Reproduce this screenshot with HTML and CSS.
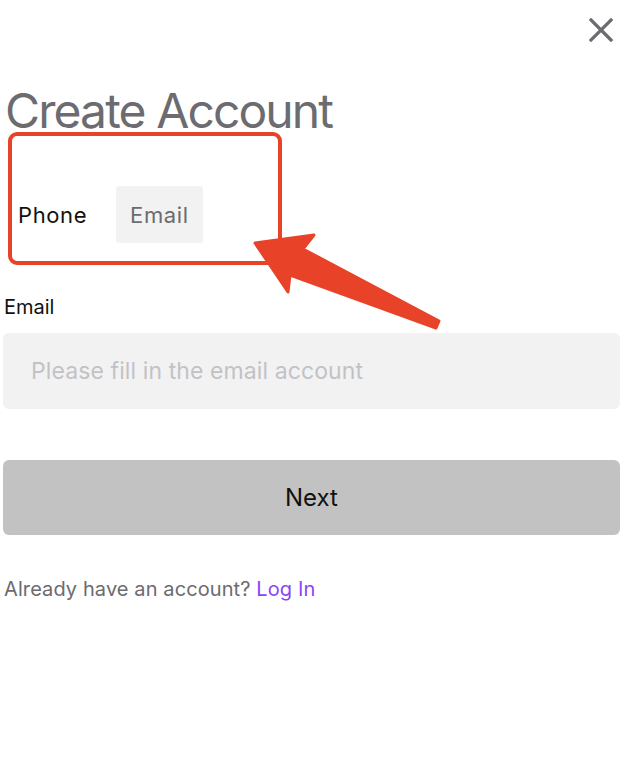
FILE: index.html
```html
<!DOCTYPE html>
<html lang="en">
<head>
  <meta charset="UTF-8" />
  <title>Create Account</title>
  <link rel="stylesheet" href="styles.css">
</head>
<body>

<div class="page">
  <div class="topbar">
    <button class="close" aria-label="Close">
      <svg width="24" height="24" viewBox="0 0 24 24">
        <path d="M2 2 L22 22 M22 2 L2 22" stroke="#6b6b70" stroke-width="3.2" stroke-linecap="square" fill="none"/>
      </svg>
    </button>
  </div>

  <h1 class="title">Create Account</h1>

  <div class="tabs">
    <div class="tab active">Phone</div>
    <div class="tab selected">Email</div>
  </div>

  <label class="label" for="email">Email</label>
  <div class="input-wrap">
    <input id="email" class="input" type="text" placeholder="Please fill in the email account">
  </div>

  <button class="next">Next</button>

  <p class="login">Already have an account? <a href="#">Log In</a></p>

  <!-- annotation over the tabs -->
  <div class="mark-box"></div>
  <svg class="mark-arrow" width="642" height="400" viewBox="0 0 642 400">
    <polygon points="255,243 314,235 303,249 439,321 436,328 290,275 288,292" fill="#e84329" stroke="#e84329" stroke-width="3" stroke-linejoin="round"/>
  </svg>
</div>

</body>
</html>
```

FILE: styles.css
```css
body {
  margin: 0;
  font-family: Inter, "Noto Sans", sans-serif;
  background: #fff;
}

.page {
  position: relative;
  padding: 0 22px 0 3px;
}

.topbar {
  display: flex;
  justify-content: flex-end;
  padding-top: 18px;
}

.close {
  border: 0;
  background: none;
  padding: 0;
  margin-right: 7px;
  width: 24px;
  height: 24px;
  display: block;
}

.close svg {
  display: block;
}

.title {
  margin: 40px 0 0 2px;
  font-size: 48px;
  line-height: 58px;
  font-weight: 400;
  color: #6b6b70;
  letter-spacing: -1.9px;
}

.tabs {
  display: flex;
  gap: 15px;
  margin-top: 46px;
  padding-left: 1px;
}

.tab {
  height: 57px;
  display: flex;
  align-items: center;
  padding: 0 14px;
  font-size: 22px;
  letter-spacing: 0.6px;
  border-radius: 3px;
}

.tab.active {
  color: #111;
}

.tab.selected {
  background: #f2f2f2;
  color: #6b6b70;
}

.label {
  display: block;
  margin: 53px 0 0 1px;
  font-size: 20px;
  line-height: 22px;
  color: #111;
}

.input-wrap {
  margin-top: 15px;
}

.input {
  box-sizing: border-box;
  width: 100%;
  height: 76px;
  border: 0;
  border-radius: 6px;
  background: #f2f2f2;
  padding: 0 28px;
  font-family: inherit;
  font-size: 23px;
  letter-spacing: 0.1px;
  outline: none;
}

.input::placeholder {
  color: #c2c2c6;
}

.next {
  display: block;
  box-sizing: border-box;
  width: 100%;
  height: 75px;
  margin-top: 51px;
  border: 0;
  border-radius: 6px;
  background: #c2c2c2;
  font-family: inherit;
  font-size: 24px;
  color: #111;
}

.login {
  margin: 42px 0 0 1px;
  font-size: 20px;
  line-height: 24px;
  letter-spacing: 0.1px;
  color: #6b6b70;
}

.login a {
  color: #8a45f5;
  text-decoration: none;
}

.mark-box {
  position: absolute;
  left: 8px;
  top: 132px;
  width: 266px;
  height: 125px;
  border: 4px solid #e84329;
  border-radius: 9px;
}

.mark-arrow {
  position: absolute;
  left: 0;
  top: 0;
  pointer-events: none;
}
```
